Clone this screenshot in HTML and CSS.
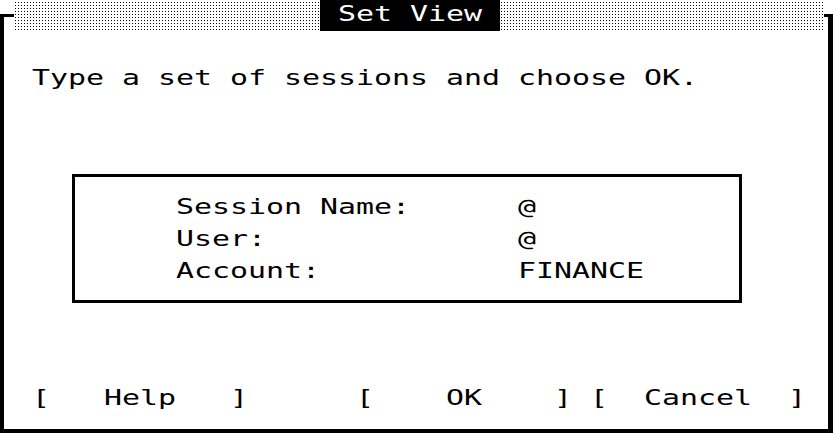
FILE: index.html
```html
<!DOCTYPE html>
<html lang="en">
<head>
    <meta charset="UTF-8">
    <title>Set View</title>
    <link rel="stylesheet" href="styles.css">
</head>
<body>
<div class="window">
    <div class="titlebar">
        <div class="corner corner-left"></div>
        <div class="hatch">
            <div class="title"><span class="t"> Set View </span></div>
        </div>
        <div class="corner corner-right"></div>
    </div>

    <div class="panel">
        <p class="prompt"><span class="t">Type a set of sessions and choose OK.</span></p>

        <div class="fields">
            <div class="line"><span class="t">Session Name:      @</span></div>
            <div class="line"><span class="t">User:              @</span></div>
            <div class="line"><span class="t">Account:           FINANCE</span></div>
        </div>

        <div class="buttons"><span class="t">[   Help   ]      [    OK    ] [  Cancel  ]</span></div>
    </div>
</div>
</body>
</html>
```

FILE: styles.css
```css
body {
    margin: 0;
    background-color: #fff;
    color: #000;
    font-family: 'DejaVu Sans Mono', monospace;
    font-size: 22px;
}
.window {
    width: 833px;
    height: 433px;
    display: flex;
    flex-direction: column;
}
.t {
    display: inline-block;
    white-space: pre;
    transform: scaleX(1.359);
    transform-origin: 0 50%;
}
.titlebar {
    display: flex;
    height: 31px;
}
.corner {
    margin-top: 14px;
    border-top: 3px solid #000;
}
.corner-left {
    width: 10px;
    border-left: 4px solid #000;
}
.corner-right {
    width: 4px;
    border-right: 5px solid #000;
}
.hatch {
    flex: 1;
    background-color: #000;
    background-image:
        linear-gradient(90deg, transparent 1px, #fff 1px),
        linear-gradient(180deg, transparent 1px, #fff 1px);
    background-size: 3px 3px;
    background-position: 1px 2px;
}
.title {
    width: 180px;
    height: 31px;
    margin-left: 306px;
    background-color: #000;
    color: #fff;
    line-height: 27px;
}
.panel {
    flex: 1;
    display: flex;
    flex-direction: column;
    align-items: flex-start;
    border-left: 4px solid #000;
    border-right: 5px solid #000;
    border-bottom: 4px solid #000;
    padding: 31px 0 15px 28px;
}
.prompt {
    margin: 0;
    line-height: 32px;
}
.fields {
    box-sizing: border-box;
    width: 670px;
    margin: 80px 0 0 40px;
    padding: 14px 0 13px 101px;
    border: 3px solid #000;
}
.line {
    line-height: 32px;
}
.buttons {
    margin-top: auto;
    line-height: 32px;
}
```
